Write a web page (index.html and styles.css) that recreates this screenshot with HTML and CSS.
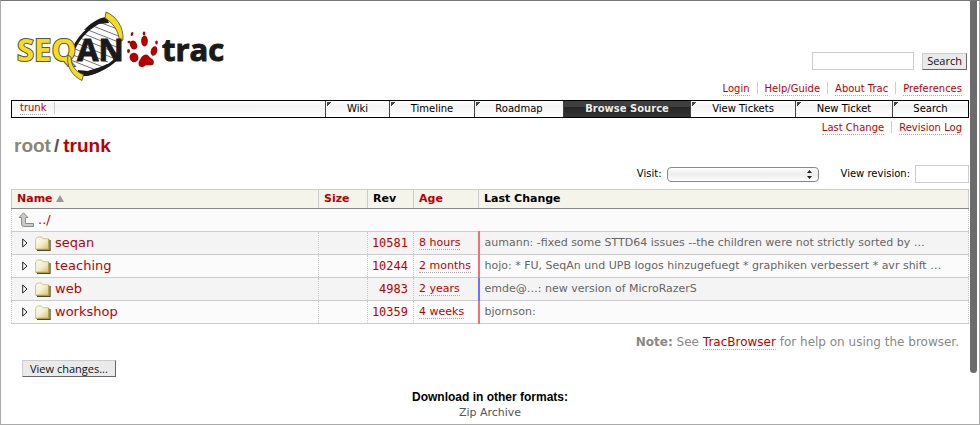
FILE: index.html
```html
<!DOCTYPE html>
<html lang="en">
<head>
<meta charset="utf-8">
<title>trunk – SeqAn – Trac</title>
<link rel="stylesheet" href="styles.css">
</head>
<body>
<div class="scrollbar"></div>
<svg class="defs" width="0" height="0" aria-hidden="true">
  <defs>
    <linearGradient id="paper" x1="0" y1="0" x2="1" y2="1"><stop offset="0" stop-color="#fffef0"/><stop offset=".5" stop-color="#f3efd0"/><stop offset="1" stop-color="#d3c06a"/></linearGradient>
    <symbol id="folder" viewBox="0 0 16 15">
      <path d="M2 14.300h13V4" fill="none" stroke="#4a4a2c" stroke-width="1.300"/>
      <path d="M.6 13.200V3.200L2.500 1h4l1.600 1.800h5.500v10.400z" fill="url(#paper)" stroke="#cbb568" stroke-width=".8"/>
      <path d="M13.800 3v10.400H1" fill="none" stroke="#a08d2c" stroke-width=".8"/>
    </symbol>
    <symbol id="expand" viewBox="0 0 6 10"><path d="M.7 1v8L5 5z" fill="#fff" stroke="#222"/></symbol>
  </defs>
</svg>
<header class="banner">
  <a class="logo" href="#" aria-label="SeqAn Trac">
    <svg width="220" height="76" viewBox="0 0 220 76">
      <path d="M91 10C76 17 67 26 61 37L53 45C53 55 58 62 67 66C86 62 99 55 105 43L107 25Z" fill="#fff"/>
      <path d="M85 14l21 8M79 18l28 11M74 22l33 13M70 26l35 14M66 30l37 15M62 35l37 15M56 39l38 15M54 45l35 14M54 51l28 11" stroke="#333" stroke-width=".7"/>
      <path d="M95 11C82 13 67 25 60 40" fill="none" stroke="#1a1a1a" stroke-width="3.200"/>
      <path d="M93 9C83 10 76 16 70 22l7-1l7-5l11-1z" fill="#1a1a1a"/>
      <path d="M106 46C99 57 84 65 67 67" fill="none" stroke="#1a1a1a" stroke-width="3.200"/>
      <path d="M93 56C86 60 78 61 74 63L64 62v5C76 70 86 65 95 57z" fill="#1a1a1a"/>
      <path d="M92 4C102 8 110 19 109 32L105.500 34C105 23 99 15 91 10Z" fill="#f6dc1b" stroke="#444" stroke-width=".8"/>
      <text class="logo-seq" x="3" y="53">SEQ</text>
      <path d="M54 47C52 58 58 68 68 72.500L69.500 66.500C62 64 57 58 57 49Z" fill="#f6dc1b" stroke="#444" stroke-width=".8"/>
      <text class="logo-an" x="63" y="53">AN</text>
      <g fill="#b00000">
        <ellipse cx="119.500" cy="37" rx="3.500" ry="4.600" transform="rotate(-22 119.500 37)"/>
        <ellipse cx="130.500" cy="33" rx="3.400" ry="5.400"/>
        <ellipse cx="140" cy="43" rx="3.200" ry="4.900" transform="rotate(18 140 43)"/>
        <ellipse cx="120" cy="49.500" rx="4.400" ry="4.800" transform="rotate(-25 120 49.500)"/>
        <ellipse cx="118" cy="26" rx="1.300" ry="2" transform="rotate(15 118 26)"/>
        <ellipse cx="130" cy="25.500" rx="1.300" ry="2"/>
        <ellipse cx="142.500" cy="34.500" rx="1.300" ry="2"/>
        <ellipse cx="115" cy="34" rx="1.500" ry="1.300"/>
        <ellipse cx="114.500" cy="43" rx="1.500" ry="1.900"/>
        <path d="M127.500 49C130 45.500 134 45.500 135.500 49C138 51 141 52 139.500 56C138 58.500 134 56.500 131.500 57.500C128 60.500 124.500 59 124.500 55.500C124.500 53 126 52 127.500 49Z"/>
      </g>
      <text class="logo-trac" x="148" y="53">trac</text>
    </svg>
  </a>
  <form class="search">
    <input type="text" aria-label="Search text">
    <button type="button">Search</button>
  </form>
</header>
<nav class="links meta">
  <a href="#">Login</a><a href="#">Help/Guide</a><a href="#">About Trac</a><a href="#">Preferences</a>
</nav>
<nav class="mainnav">
  <span class="crumb"><a href="#">trunk</a></span>
  <a class="tab wiki" href="#">Wiki</a>
  <a class="tab timeline" href="#">Timeline</a>
  <a class="tab roadmap" href="#">Roadmap</a>
  <a class="tab active" href="#">Browse Source</a>
  <a class="tab tickets" href="#">View Tickets</a>
  <a class="tab new" href="#">New Ticket</a>
  <a class="tab find" href="#">Search</a>
</nav>
<nav class="links context">
  <a href="#">Last Change</a><a href="#">Revision Log</a>
</nav>
<main>
  <h1><a class="root" href="#">root</a><span>/</span><a href="#">trunk</a></h1>
  <form class="jump">
    <label for="visit">Visit:</label>
    <span class="picker">
      <select id="visit"><option></option></select>
      <svg width="5" height="9" viewBox="0 0 5 9" aria-hidden="true"><path d="M0 3l2.500-3L5 3zM0 6l2.500 3L5 6z" fill="#222"/></svg>
    </span>
    <label for="rev">View revision:</label>
    <input id="rev" type="text">
  </form>
  <table>
    <colgroup><col class="c-name"><col class="c-size"><col class="c-rev"><col class="c-age"><col></colgroup>
    <thead>
      <tr><th><a href="#">Name <svg width="8" height="7" viewBox="0 0 8 7" aria-hidden="true"><path d="M4 0l4 7H0z" fill="#999"/></svg></a></th><th><a href="#">Size</a></th><th>Rev</th><th><a href="#">Age</a></th><th>Last Change</th></tr>
    </thead>
    <tbody>
      <tr><td colspan="5"><a class="entry up" href="#"><svg width="17" height="16" viewBox="0 0 17 16" aria-hidden="true"><path d="M5.500.8L10 5.500H7.500V11.500H15.500V14.500H6Q3.500 14.500 3.500 12V5.500H1z" fill="#c9ccc7" stroke="#8b8f89"/></svg>../</a></td></tr>
      <tr><td><a class="entry" href="#"><svg class="exp"><use href="#expand"/></svg><svg class="dir"><use href="#folder"/></svg>seqan</a></td><td></td><td class="rev"><a href="#">10581</a></td><td class="age"><a href="#">8 hours</a></td><td class="change">aumann: -fixed some STTD64 issues --the children were not strictly sorted by …</td></tr>
      <tr><td><a class="entry" href="#"><svg class="exp"><use href="#expand"/></svg><svg class="dir"><use href="#folder"/></svg>teaching</a></td><td></td><td class="rev"><a href="#">10244</a></td><td class="age"><a href="#">2 months</a></td><td class="change">hojo: * FU, SeqAn und UPB logos hinzugefuegt * graphiken verbessert * avr shift …</td></tr>
      <tr><td><a class="entry" href="#"><svg class="exp"><use href="#expand"/></svg><svg class="dir"><use href="#folder"/></svg>web</a></td><td></td><td class="rev"><a href="#">4983</a></td><td class="age old"><a href="#">2 years</a></td><td class="change">emde@…: new version of MicroRazerS</td></tr>
      <tr><td><a class="entry" href="#"><svg class="exp"><use href="#expand"/></svg><svg class="dir"><use href="#folder"/></svg>workshop</a></td><td></td><td class="rev"><a href="#">10359</a></td><td class="age"><a href="#">4 weeks</a></td><td class="change">bjornson:</td></tr>
    </tbody>
  </table>
  <p class="help"><strong>Note:</strong> See <a href="#">TracBrowser</a> for help on using the browser.</p>
  <button class="diff" type="button">View changes...</button>
</main>
<footer>
  <h2>Download in other formats:</h2>
  <a href="#">Zip Archive</a>
</footer>
</body>
</html>
```
FILE: styles.css
```css
* { box-sizing: border-box; }
html { height: 100%; }
body {
  margin: 0;
  min-height: 100%;
  padding: 0 10px;
  border: 1px solid #aaa;
  border-top-color: #777;
  background: #fff;
  color: #000;
  font: 13px/16px "DejaVu Sans", Verdana, sans-serif;
  overflow: hidden;
}
a { color: #b00; text-decoration: none; }
input, button, select { font: inherit; border-radius: 0; margin: 0; }
.defs { position: absolute; }
.scrollbar {
  position: fixed;
  top: 1px;
  right: 3px;
  width: 7px;
  height: 372px;
  background: #6b6b6b;
  border-radius: 0 0 4px 4px;
}
.banner {
  display: flex;
  justify-content: space-between;
  align-items: flex-end;
  height: 79px;
  padding: 7px 2px 10px 3px;
}
.logo, .logo svg { display: block; }
.logo { align-self: flex-start; height: 62px; }
.logo-seq, .logo-an { font: bold 31px "Open Sans", sans-serif; }
.logo-seq { fill: #f6dc1b; stroke: #555; stroke-width: 2px; paint-order: stroke; }
.logo-an { fill: #1a1a1a; stroke: #1a1a1a; stroke-width: 1px; }
.logo-trac { font: bold 31px "Open Sans", sans-serif; fill: #1a1a1a; stroke: #1a1a1a; stroke-width: 1px; }
.search { display: flex; align-items: center; gap: 8px; }
.search input { width: 102px; height: 18px; border: 1px solid #ccc; }
button {
  height: 17px;
  padding: 0 4px;
  border: 1px solid #ccc;
  border-right-color: #666;
  border-bottom-color: #666;
  background: #eaeaea;
  color: #111;
  font: 11px/14px "Open Sans", sans-serif;
}
.links { display: flex; justify-content: flex-end; font-size: 10px; line-height: 12px; }
.links a { margin-left: 15px; border-bottom: 1px dotted #aaa; position: relative; }
.links a + a::before { content: ""; position: absolute; left: -8px; top: -1px; height: 12px; border-left: 1px solid #ccc; }
.meta { height: 20px; padding: 3px 7px 3px 0; }
.context { height: 17px; padding: 4px 7px 0 0; }
.meta a, .context a { height: 13px; }
.mainnav {
  display: flex;
  height: 18px;
  border: 1px solid #000;
  background: linear-gradient(#fff, #f4f4f4 30%, #fff);
  font-size: 10px;
  line-height: 16px;
}
.crumb { flex: 1; padding: 1px 8px; line-height: 12px; }
.crumb a { display: inline-block; border-bottom: 1px dotted #aaa; position: relative; }
.crumb a::after { content: ""; position: absolute; right: -8px; top: 0; height: 12px; border-right: 1px solid #ccc; }
.tab { border-left: 1px solid #444; color: #000; text-align: center; background: linear-gradient(135deg, #444 3px, transparent 3px) 1px 1px no-repeat; }
.wiki { width: 64px; }
.timeline { width: 85px; }
.roadmap { width: 89px; }
.active { width: 127px; background: linear-gradient(#3f3f3f 35%, #252525 36%, #333); color: #eee; font-weight: bold; }
.tickets { width: 105px; }
.new { width: 97px; }
.find { width: 76px; }
h1 { margin: 0; padding-left: 3px; font: bold 19px/22px "Liberation Sans", Arial, sans-serif; }
h1 span { color: #555; padding: 0 4px 0 3px; }
h1 .root { color: #887; }
.jump { display: flex; justify-content: flex-end; align-items: center; height: 18px; margin: 8px 0 6px; font-size: 11px; line-height: 14px; }
.jump label { font-size: 10px; }
.picker { display: block; position: relative; width: 152px; height: 15px; margin: 0 22px 0 5px; }
.picker select {
  appearance: none;
  display: block;
  width: 100%;
  height: 15px;
  border: 1px solid #888;
  border-radius: 4px;
  background: linear-gradient(#fff, #ececec 50%, #fff);
}
.picker svg { position: absolute; right: 7px; top: 3px; }
.jump input { width: 54px; height: 18px; margin-left: 5px; border: 1px solid #ccc; }
table { width: 100%; border-collapse: collapse; table-layout: fixed; }
.c-name { width: 307px; }
.c-size { width: 49px; }
.c-rev { width: 46px; }
.c-age { width: 65px; }
th {
  height: 19px;
  padding: 0 5px;
  border: 1px solid #ccc;
  border-bottom-color: #888;
  background: #f4f4ea;
  font-size: 11px;
  line-height: 16px;
  text-align: left;
}
td { height: 23px; padding: 0; border: 1px dotted #ccc; border-top-style: solid; border-bottom-style: solid; white-space: nowrap; }
tbody tr { background: #fbfbfb; }
tbody tr:nth-child(even) { background: #f4f4f4; }
tbody tr:first-child td { border-top-color: #888; }
.entry { display: flex; align-items: center; line-height: 16px; }
.up { padding-left: 6px; gap: 3px; }
.exp { width: 6px; height: 10px; margin: 0 7px 0 10px; }
.dir { width: 16px; height: 15px; margin-right: 4px; }
.rev { padding-right: 5px; text-align: right; font: 12px/14px "DejaVu Sans Mono", monospace; }
.age { padding-left: 5px; border-right: 2px solid #f07078; font-size: 11px; line-height: 12px; }
.age a { display: inline-block; border-bottom: 1px dotted #aaa; }
.old { border-right-color: #7070ff; }
.change { padding-left: 5px; color: #666; font-size: 11px; line-height: 14px; }
.help { margin: 10px 10px 10px 0; color: #888; font-size: 12px; text-align: right; }
.help a { display: inline-block; line-height: 14px; border-bottom: 1px dotted #aaa; }
.diff { display: block; margin-left: 11px; padding: 0 7px; }
footer { margin-top: 12px; text-align: center; font-size: 11px; line-height: 16px; }
footer h2 { margin: 0; font: bold 12px/16px "Liberation Sans", Arial, sans-serif; }
footer a { color: #555; }
```
